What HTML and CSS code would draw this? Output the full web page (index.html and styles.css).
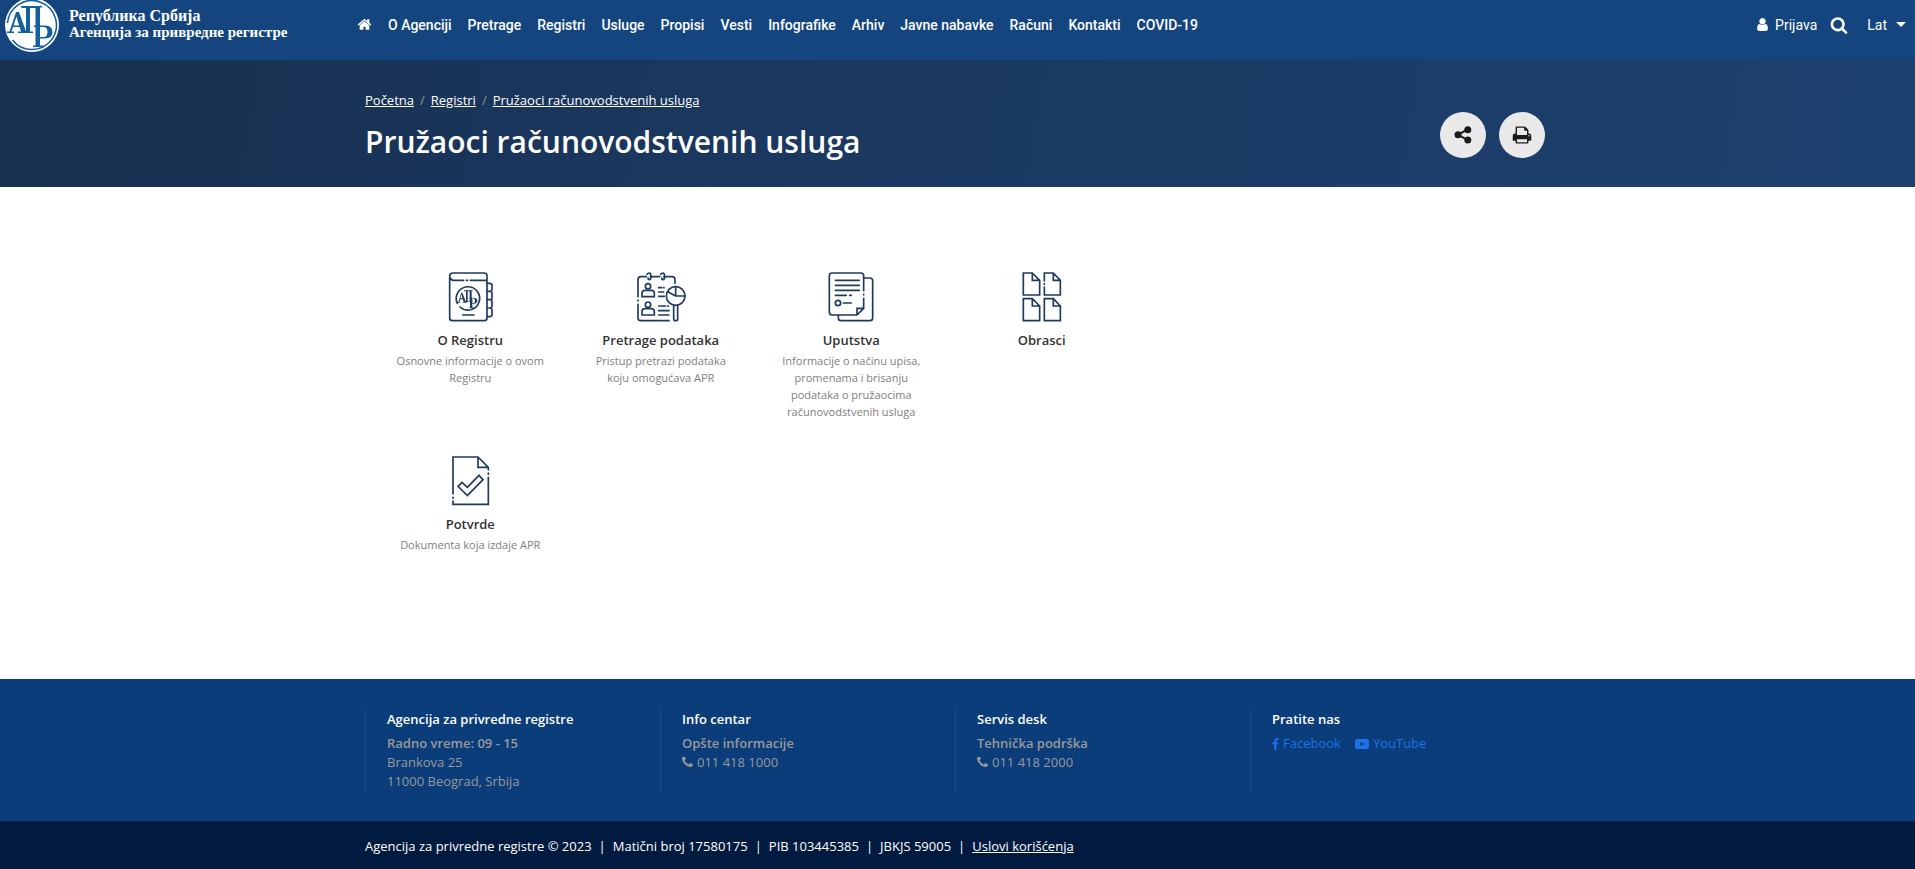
FILE: index.html
```html
<!DOCTYPE html>
<html lang="sr-Latn">
<head>
<meta charset="utf-8">
<meta name="viewport" content="width=device-width, initial-scale=1">
<title>Pružaoci računovodstvenih usluga</title>
<link rel="stylesheet" href="styles.css">
</head>
<body>
<header class="topbar">
  <a class="brand" href="#">
    <svg class="brand-logo" viewBox="0 0 54 54" aria-hidden="true">
      <circle cx="27" cy="27" r="27" fill="#fff"/>
      <path d="M2.500 25a24.500 24.500 0 1 1 5 17" fill="none" stroke="#14609f" stroke-width="1.600"/>
      <g fill="#14609f">
        <path fill-rule="evenodd" d="M11 14h3l7 19.500h2V35h-10v-1.500h3L14.500 29H8l-1.500 4.500H9V35H2v-1.500h2.500zM11.500 18.500 8.500 27.500h5.500z"/>
        <path d="M16 8h21v1.500h-2V28.500H30.500V10H25v23.500h3V35H19v-1.500h2V10h-3l-2-.5z"/>
        <path fill-rule="evenodd" d="M29 27.500h11q7.500 0 7.500 6.500t-7.500 6.500h-5v7h3.500V49H28v-1.500h2.500V29H29zM35 29v10h3.500q4 0 4-5t-4-5z"/>
      </g>
    </svg>
    <span class="brand-text"><span class="brand-state">Република Србија</span><br>Агенција за привредне регистре</span>
  </a>
  <nav class="mainnav">
    <a href="#" aria-label="Početna"><svg class="fa" viewBox="0 0 1792 1792"><path d="M1472 992v480q0 26-19 45t-45 19h-384v-384h-256v384h-384q-26 0-45-19t-19-45v-480q0-1 .5-3t.5-3l575-474 575 474q1 2 1 6zm223-69l-62 74q-8 9-21 11h-3q-13 0-21-7l-692-577-692 577q-12 8-24 7-13-2-21-11l-62-74q-8-10-7-23.500t11-21.500l719-599q32-26 76-26t76 26l244 204v-195q0-14 9-23t23-9h192q14 0 23 9t9 23v408l219 182q10 8 11 21.500t-7 23.500z"/></svg></a>
    <a href="#">O Agenciji</a>
    <a href="#">Pretrage</a>
    <a href="#">Registri</a>
    <a href="#">Usluge</a>
    <a href="#">Propisi</a>
    <a href="#">Vesti</a>
    <a href="#">Infografike</a>
    <a href="#">Arhiv</a>
    <a href="#">Javne nabavke</a>
    <a href="#">Računi</a>
    <a href="#">Kontakti</a>
    <a href="#">COVID-19</a>
  </nav>
  <div class="tools">
    <a class="login" href="#"><svg class="fa" viewBox="0 0 1792 1792"><path d="M1536 1399q0 109-62.500 187t-150.500 78h-854q-88 0-150.500-78t-62.500-187q0-85 8.500-160.500t31.500-152 58.500-131 94-89 134.500-34.500q131 128 313 128t313-128q76 0 134.500 34.500t94 89 58.500 131 31.500 152 8.500 160.500zm-256-887q0 159-112.500 271.500t-271.500 112.500-271.500-112.500-112.500-271.500 112.500-271.500 271.500-112.500 271.500 112.500 112.500 271.500z"/></svg>Prijava</a>
    <button class="search" type="button" aria-label="Pretraga"><svg class="fa fa-large" viewBox="0 0 1792 1792"><path d="M1216 832q0-185-131.500-316.500t-316.500-131.500-316.500 131.500-131.500 316.500 131.500 316.500 316.500 131.500 316.500-131.500 131.500-316.500zm512 832q0 52-38 90t-90 38q-54 0-90-38l-343-342q-179 124-399 124-143 0-273.500-55.500t-225-150-150-225-55.500-273.500 55.500-273.500 150-225 225-150 273.500-55.500 273.500 55.500 225 150 150 225 55.500 273.500q0 220-124 399l343 343q37 37 37 90z"/></svg></button>
    <button class="lang" type="button" aria-haspopup="true">Lat<span class="caret"></span></button>
  </div>
</header>

<section class="hero">
  <div class="container hero-row">
    <div>
      <nav class="crumbs" aria-label="Putanja">
        <a href="#">Početna</a><span class="slash">/</span><a href="#">Registri</a><span class="slash">/</span><a href="#">Pružaoci računovodstvenih usluga</a>
      </nav>
      <h1>Pružaoci računovodstvenih usluga</h1>
    </div>
    <div class="actions">
      <button class="round" type="button" aria-label="Podeli"><svg viewBox="0 0 18 18"><path d="M13.500 3.500 4 8.700l9.500 5.300" fill="none" stroke="#1c1c1c" stroke-width="2"/><circle cx="4" cy="8.700" r="3.500"/><circle cx="13.800" cy="3.700" r="3.500"/><circle cx="13.800" cy="13.900" r="3.500"/></svg></button>
      <button class="round" type="button" aria-label="Štampaj"><svg class="print" viewBox="0 0 1792 1792"><path d="M448 1536h896v-256h-896v256zm0-640h896v-384h-160q-40 0-68-28t-28-68v-160h-640v640zm1152 64q0-26-19-45t-45-19-45 19-19 45 19 45 45 19 45-19 19-45zm128 0v416q0 13-9.500 22.500t-22.500 9.500h-224v160q0 40-28 68t-68 28h-960q-40 0-68-28t-28-68v-160h-224q-13 0-22.500-9.500t-9.500-22.500v-416q0-79 56.500-135.500t135.500-56.500h64v-544q0-40 28-68t68-28h672q40 0 88 20t76 48l152 152q28 28 48 76t20 88v256h64q79 0 135.500 56.500t56.500 135.500z"/></svg></button>
    </div>
  </div>
</section>

<main class="container content">
  <div class="tiles">
    <a class="tile" href="#">
      <svg class="tile-icon" viewBox="195 35 150 150">
        <path d="M209 47v126q0 8 8 8h96q8 0 8-8V46q0-8-8-8h-94q-10 0-10 10t10 12h32M259 60h4M271 60h49"/>
        <path d="M321 69h8q7 0 7 7v11q0 6-6 6h-9M330 93q6 0 6 6v13q0 6-6 6h-9M330 118q6 0 6 6v13q0 6-6 6h-9M330 143q6 0 6 6v13q0 7-7 7h-8M248 164h34"/>
        <path d="M232 129a35 35 0 1 1 8 11" />
        <path class="fill" d="M244 97h3l11 28h2v2h-11v-2h2l-3-8h-7l-3 8h3v2h-8v-2h2zM245 102l-4 12h6z"/>
        <path class="fill" d="M252 90h26v2h-3v31h3v2h-11v-2h2V93h-6v30h3v2h-9v-2h1V93h-6zM266 112h14q12 0 12 9t-12 9h-3v11h3v2h-12v-2h2v-27h-4zM277 114v14h3q5 0 5-7t-5-7z"/>
      </svg>
      <h2>O Registru</h2>
      <p>Osnovne informacije o ovom Registru</p>
    </a>
    <a class="tile" href="#">
      <svg class="tile-icon" viewBox="767 35 150 150">
        <path d="M773 109V58q0-9 9-9h16M810 49h28M851 49h23q10 0 10 10v10M773 119v3M773 132v40q0 9 9 9h84"/>
        <path d="M800 42q3-4 7-4 5 1 5 10 0 10-5 10-4 0-4-5M841 42q3-4 7-4 5 1 5 10 0 10-5 10-4 0-4-5"/>
        <circle cx="803" cy="78" r="8"/><path d="M785 109h37v-10q0-9-9-9h-19q-9 0-9 9z"/>
        <circle cx="803" cy="133" r="8"/><path d="M785 164h37v-10q0-9-9-9h-19q-9 0-9 9z"/>
        <path d="M835 82h9M850 82h1M835 95h15M835 108h17M835 137h20M861 137h4M835 151h31M835 164h31"/>
        <circle cx="886" cy="107" r="28"/><path d="M886 79v28h28M886 107l-24-13M880 135v40q0 6 6 6t6-6v-40"/>
      </svg>
      <h2>Pretrage podataka</h2>
      <p>Pristup pretrazi podataka koju omogućava APR</p>
    </a>
    <a class="tile" href="#">
      <svg class="tile-icon" viewBox="199 35 150 150">
        <path d="M312 91V46q0-8-8-8h-87q-8 0-8 8v110q0 8 8 8h75l20-20v-30M312 102v2M292 164v-20h20"/>
        <path d="M313 53h18q8 0 8 8v112q0 8-8 8h-87q-8 0-8-8v-9"/>
        <path d="M227 60h72M227 75h72M227 90h72M227 105h33M270 105h5M251 128h24"/>
        <circle cx="235" cy="128" r="8"/>
      </svg>
      <h2>Uputstva</h2>
      <p>Informacije o načinu upisa, promenama i brisanju podataka o pružaocima računovodstvenih usluga</p>
    </a>
    <a class="tile" href="#">
      <svg class="tile-icon" viewBox="771 35 150 150">
        <path d="M790 38h27l22 22v44h-49zM817 38v22h22"/>
        <path d="M853 62V38h27l21 22v44h-48V80M880 38v22h21M853 70v2"/>
        <path d="M790 115h27l22 22v44h-49zM817 115v22h22M853 115h27l21 22v44h-48zM880 115v22h21"/>
      </svg>
      <h2>Obrasci</h2>
    </a>
    <a class="tile" href="#">
      <svg class="tile-icon" viewBox="195 47 150 150">
        <path d="M219 161V50h75l31 31v8M294 50v31h31M325 98v4M325 111v81H219v-10M219 171v3"/>
        <path d="m234 138 12-12 16 15 35-36 12 13-47 48z"/>
      </svg>
      <h2>Potvrde</h2>
      <p>Dokumenta koja izdaje APR</p>
    </a>
  </div>
</main>

<footer>
  <div class="footer-top">
    <div class="container footer-cols">
      <section class="col">
        <h3>Agencija za privredne registre</h3>
        <p><strong>Radno vreme: 09 - 15</strong><br>Brankova 25<br>11000 Beograd, Srbija</p>
      </section>
      <section class="col">
        <h3>Info centar</h3>
        <p><strong>Opšte informacije</strong><br><svg class="phone" viewBox="192 256 1408 1408"><use href="#phone"/></svg>011 418 1000</p>
      </section>
      <section class="col">
        <h3>Servis desk</h3>
        <p><strong>Tehnička podrška</strong><br><svg class="phone" viewBox="192 256 1408 1408"><path id="phone" d="M1600 1240q0 27-10 70.500t-21 68.500q-21 50-122 106-94 51-186 51-27 0-53-3.500t-57.500-12.500-47-14.500-55.500-20.500-49-18q-98-35-175-83-127-79-264-216t-216-264q-48-77-83-175-3-9-18-49t-20.500-55.500-14.500-47-12.500-57.500-3.500-53q0-92 51-186 56-101 106-122 25-11 68.500-21t70.500-10q14 0 21 3 18 6 53 76 11 19 30 54t35 63.500 31 53.500q3 4 17.500 25t21.500 35.500 7 28.500q0 20-28.500 50t-62 55-62 53-28.500 46q0 9 5 22.500t8.500 20.500 14 24 11.500 19q76 137 174 235t235 174q2 1 19 11.500t24 14 20.500 8.500 22.500 5q18 0 46-28.500t53-62 55-62 50-28.500q14 0 28.500 7t35.500 21.500 25 17.500q25 15 53.500 31t63.500 35 54 30q70 35 76 53 3 7 3 21z"/></svg>011 418 2000</p>
      </section>
      <section class="col">
        <h3>Pratite nas</h3>
        <p class="social">
          <a href="#"><svg class="fb" viewBox="479 0 864 1664"><path d="M1343 12v264h-157q-86 0-116 36t-30 108v189h293l-39 296h-254v759h-306v-759h-255v-296h255v-218q0-186 104-288.500t277-102.500q147 0 228 12z"/></svg>Facebook</a>
          <a href="#"><svg class="yt" viewBox="0 0 14 10"><path fill-rule="evenodd" d="M2.500 0h9Q14 0 14 2.500v5Q14 10 11.500 10h-9Q0 10 0 7.500v-5Q0 0 2.500 0zM5.500 2.800v4.400L9.500 5z"/></svg>YouTube</a>
        </p>
      </section>
    </div>
  </div>
  <div class="footer-bottom">
    <div class="container legal">
      <span>Agencija za privredne registre © 2023</span><span>|</span><span>Matični broj 17580175</span><span>|</span><span>PIB 103445385</span><span>|</span><span>JBKJS 59005</span><span>|</span><a href="#">Uslovi korišćenja</a>
    </div>
  </div>
</footer>
</body>
</html>
```

FILE: styles.css
```css
* { box-sizing: border-box; }

body {
  margin: 0;
  min-height: 100vh;
  display: flex;
  flex-direction: column;
  font-family: "Open Sans", sans-serif;
  font-size: 13px;
  color: #333;
  background: #fff;
}

a { color: inherit; text-decoration: none; }
h1, h2, h3, p { margin: 0; }

button {
  padding: 0;
  border: 0;
  background: none;
  color: inherit;
  font: inherit;
  cursor: pointer;
}

svg { fill: currentColor; }

.container {
  width: 100%;
  max-width: 1185px;
  margin: 0 auto;
  padding-right: 5px;
}

/* Top bar */
.topbar {
  display: flex;
  height: 60px;
  background: #14457f;
  color: #fff;
  font-family: Roboto, sans-serif;
  font-size: 14px;
}

.brand {
  display: flex;
  flex: 0 0 357px;
  gap: 10px;
  padding-left: 5px;
}

.brand-logo { width: 54px; height: 54px; margin-top: -2px; }

.brand-text {
  padding-top: 8px;
  font: bold 15px/16px "Liberation Serif", serif;
  white-space: nowrap;
}

.brand-state { font-size: 16px; }

.mainnav {
  display: flex;
  gap: 16px;
  height: 49px;
  align-items: center;
  font-weight: 500;
  white-space: nowrap;
}

.fa { display: block; width: 15px; height: 15px; }
.fa-large { width: 18px; height: 18px; }

.tools {
  display: flex;
  align-items: center;
  height: 49px;
  margin-left: auto;
  padding-right: 9px;
}

.login { display: flex; align-items: center; gap: 5px; }
.search { margin-left: 13px; }
.lang { display: flex; align-items: center; gap: 9px; margin-left: 19px; }

.caret {
  border: 5px solid transparent;
  border-top-color: #fff;
  border-bottom: 0;
}

/* Page heading */
.hero {
  height: 127px;
  background: linear-gradient(100deg, #182f4d, #1a365d 30%, #1d416f);
  color: #fff;
}

.hero-row { display: flex; justify-content: space-between; }

.crumbs { padding-top: 30px; line-height: 20px; }
.crumbs a { text-decoration: underline; }
.slash { padding: 0 6px; color: #8593a8; }

h1 { padding-top: 12px; font-size: 30px; line-height: 40px; font-weight: 600; }

.actions { display: flex; gap: 13px; padding-top: 52px; }

.round {
  display: grid;
  place-items: center;
  width: 46px;
  height: 46px;
  border-radius: 50%;
  background: #e9e9e9;
  color: #1c1c1c;
}

.round svg { width: 18px; height: 18px; }
.round .print { width: 20px; height: 20px; }

/* Tiles */
.content { flex: 1; padding-top: 85px; }

.tiles {
  display: grid;
  grid-template-columns: repeat(4, 1fr);
  row-gap: 36px;
  max-width: 772px;
  padding-left: 10px;
}

.tile { padding: 0 20px; text-align: center; }

.tile-icon {
  width: 50px;
  height: 50px;
  fill: none;
  stroke: #1f3a5f;
  stroke-width: 5;
  stroke-linecap: round;
}

.tile-icon .fill { fill: #1f3a5f; stroke: none; }

h2 { padding-top: 4px; font-size: 13px; line-height: 20px; font-weight: 600; }

.tile p { padding-top: 2px; font-size: 11px; line-height: 17px; color: #808080; }

/* Footer */
.footer-top { padding: 30px 0; background: #0a3d7a; color: #999; }

.footer-cols { display: grid; grid-template-columns: repeat(4, 1fr); }

.col {
  padding-left: 21px;
  border-left: 1px solid #1d4c87;
}

h3 { font-size: 13px; line-height: 20px; font-weight: 600; color: #fff; }

.col p { padding-top: 5px; line-height: 19px; }
.col strong { font-weight: 600; }

.phone { width: 11px; height: 11px; margin-right: 4px; vertical-align: -1px; }

.social { display: flex; gap: 14px; color: #1a73e8; }
.social a { display: flex; align-items: center; }
.fb { width: 7px; height: 12px; margin-right: 4px; }
.yt { width: 14px; height: 10px; margin-right: 4px; }

.footer-bottom { padding: 15px 0 13px; background: #001b3f; color: #fff; line-height: 20px; }
.legal { display: flex; flex-wrap: wrap; gap: 7px; }
.legal a { text-decoration: underline; }
```
